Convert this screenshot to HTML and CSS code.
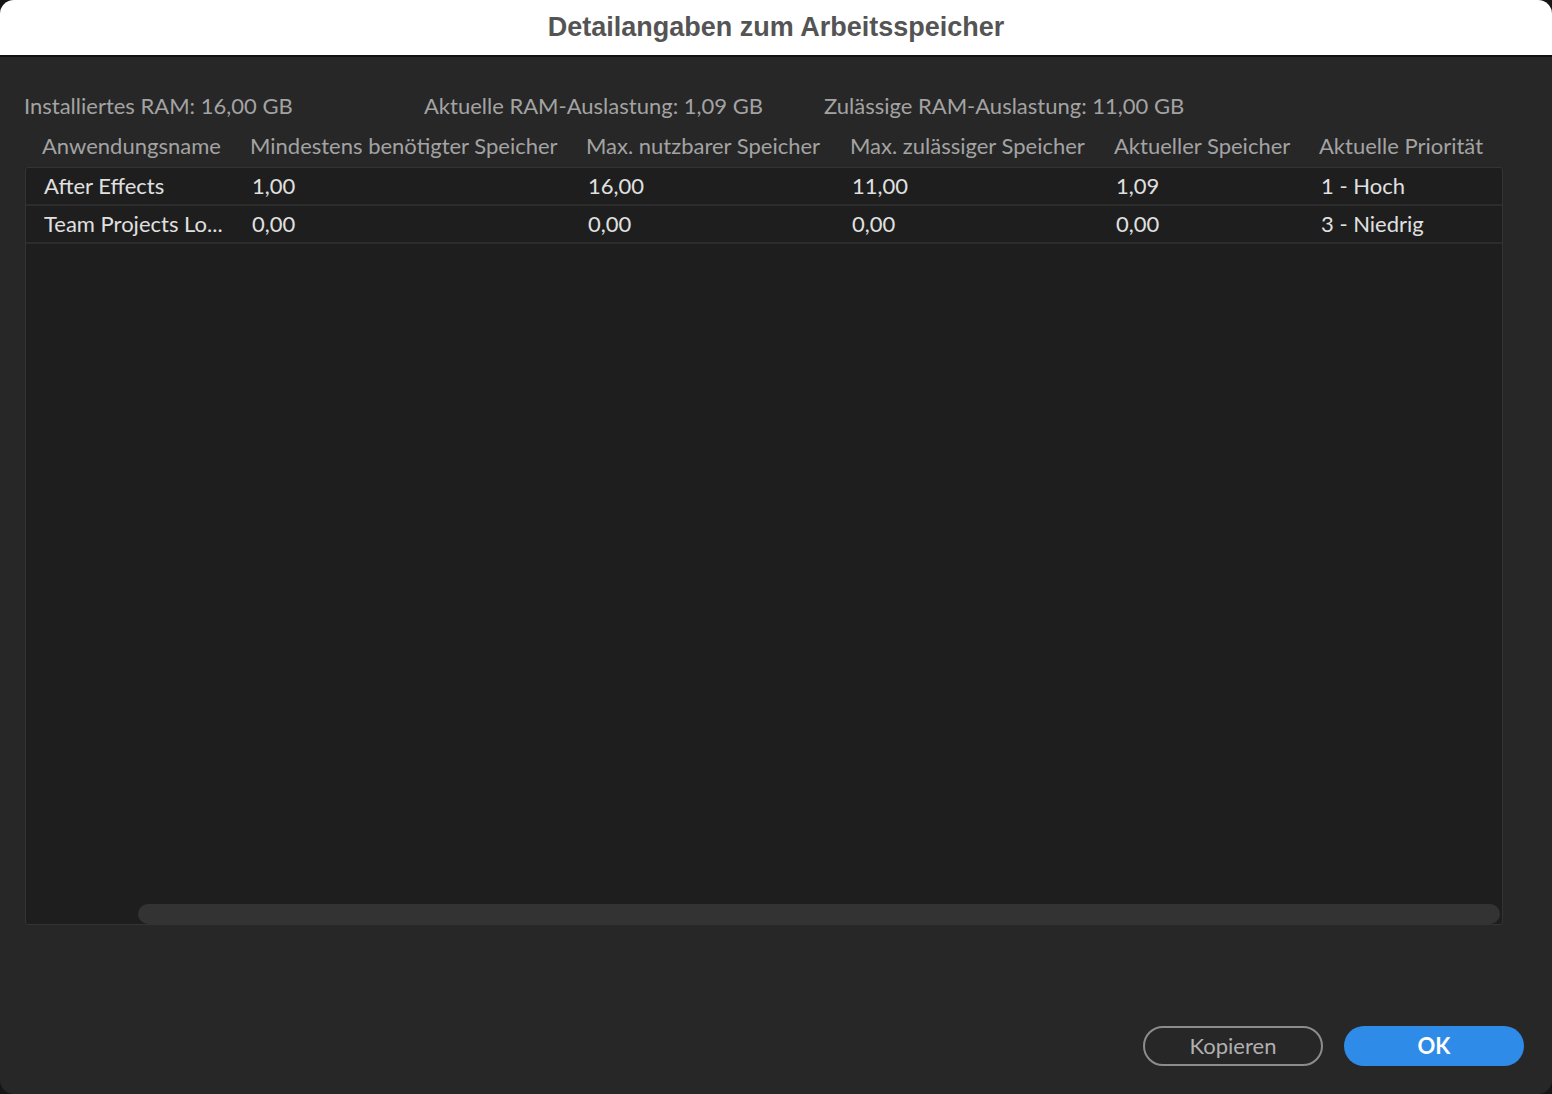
FILE: index.html
```html
<!DOCTYPE html>
<html lang="de">
<head>
<meta charset="utf-8">
<title>Detailangaben zum Arbeitsspeicher</title>
<link rel="stylesheet" href="styles.css">
</head>
<body>
<div class="dialog">
  <div class="titlebar">Detailangaben zum Arbeitsspeicher</div>
  <div class="content">
    <div class="info">
      <span class="info-item">Installiertes RAM: 16,00 GB</span>
      <span class="info-item">Aktuelle RAM-Auslastung: 1,09 GB</span>
      <span class="info-item">Zulässige RAM-Auslastung: 11,00 GB</span>
    </div>
    <div class="thead">
      <span>Anwendungsname</span>
      <span>Mindestens benötigter Speicher</span>
      <span>Max. nutzbarer Speicher</span>
      <span>Max. zulässiger Speicher</span>
      <span>Aktueller Speicher</span>
      <span>Aktuelle Priorität</span>
    </div>
    <div class="table">
      <div class="rows">
        <div class="row">
          <span>After Effects</span>
          <span>1,00</span>
          <span>16,00</span>
          <span>11,00</span>
          <span>1,09</span>
          <span>1 - Hoch</span>
        </div>
        <div class="row">
          <span>Team Projects Lo...</span>
          <span>0,00</span>
          <span>0,00</span>
          <span>0,00</span>
          <span>0,00</span>
          <span>3 - Niedrig</span>
        </div>
      </div>
      <div class="scrollbar"><div class="thumb"></div></div>
    </div>
    <div class="buttons">
      <button class="btn btn-secondary">Kopieren</button>
      <button class="btn btn-primary">OK</button>
    </div>
  </div>
</div>
</body>
</html>
```
FILE: styles.css
```css
html, body {
  margin: 0;
  padding: 0;
  background: #161616;
}
.dialog {
  width: 1552px;
  height: 1094px;
  display: flex;
  flex-direction: column;
  border-radius: 14px;
  overflow: hidden;
  background: #272727;
  font-family: "Lato", "Open Sans", sans-serif;
}
.titlebar {
  height: 57px;
  box-sizing: border-box;
  background: #ffffff;
  border-bottom: 2px solid #111111;
  display: flex;
  align-items: center;
  justify-content: center;
  font-family: "Liberation Sans", Arial, sans-serif;
  font-weight: bold;
  font-size: 27px;
  color: #545454;
}
.content {
  flex: 1;
  display: flex;
  flex-direction: column;
  padding: 0 24px 0 24px;
}
.info {
  display: flex;
  margin-top: 32px;
  height: 32px;
  align-items: center;
  font-size: 22px;
  color: #a3a3a3;
}
.info-item {
  width: 400px;
}
.thead, .row {
  display: grid;
  grid-template-columns: 208px 336px 264px 264px 205px 1fr;
  align-items: center;
  font-size: 22px;
}
.thead {
  height: 46px;
  padding-left: 18px;
  padding-top: 3px;
  box-sizing: border-box;
  color: #a3a3a3;
}
.table {
  width: 1478px;
  height: 758px;
  box-sizing: border-box;
  background: #1e1e1e;
  border: 1px solid #333333;
  border-radius: 3px;
  display: flex;
  flex-direction: column;
  justify-content: space-between;
  margin-left: 1px;
}
.rows {
  display: flex;
  flex-direction: column;
}
.row {
  height: 34px;
  padding-bottom: 2px;
  border-bottom: 2px solid #2c2c2c;
  padding-left: 18px;
  color: #e0e0e0;
}
.scrollbar {
  height: 20px;
  padding-left: 112px;
  padding-right: 2px;
}
.thumb {
  height: 20px;
  border-radius: 10px;
  background: #333333;
}
.buttons {
  display: flex;
  justify-content: flex-end;
  gap: 21px;
  margin-top: 101px;
  padding-right: 4px;
}
.btn {
  width: 180px;
  height: 40px;
  border-radius: 20px;
  font-family: "Lato", "Open Sans", sans-serif;
  font-size: 22px;
  box-sizing: border-box;
  cursor: pointer;
  padding: 0 0 2px 0;
}
.btn-secondary {
  background: transparent;
  border: 2px solid #8c8c8c;
  color: #b0b0b0;
}
.btn-primary {
  background: #2f8be8;
  border: none;
  color: #ffffff;
  font-weight: bold;
}
```
